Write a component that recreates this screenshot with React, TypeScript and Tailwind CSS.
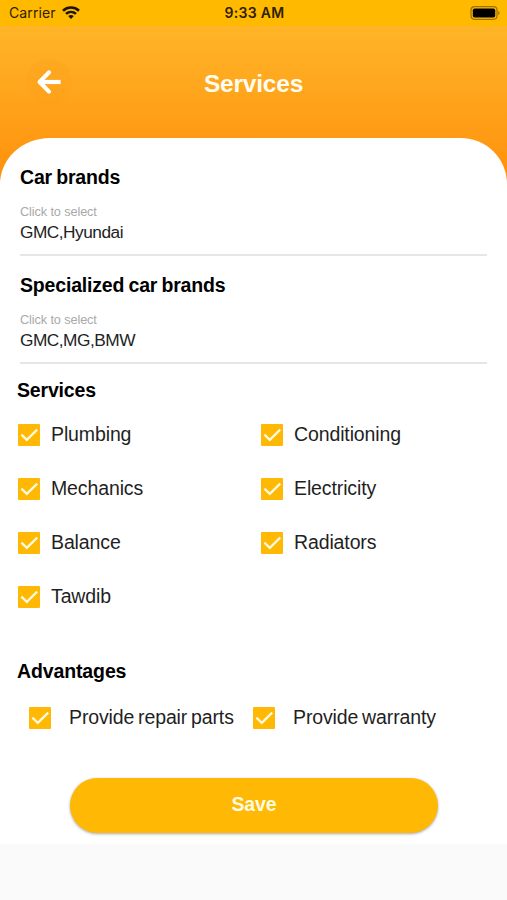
import React, { useState } from 'react';

const SERVICES = ['Plumbing', 'Conditioning', 'Mechanics', 'Electricity', 'Balance', 'Radiators', 'Tawdib'];
const ADVANTAGES = ['Provide repair parts', 'Provide warranty'];

interface CheckItemProps {
  label: string;
  checked: boolean;
  onToggle: () => void;
  className?: string;
}

function CheckItem({ label, checked, onToggle, className = '' }: CheckItemProps) {
  return (
    <button type="button" role="checkbox" aria-checked={checked} onClick={onToggle} className={`flex items-center text-left ${className}`}>
      <span className={`flex h-[22px] w-[22px] shrink-0 items-center justify-center rounded-[1px] ${checked ? 'bg-[#ffb803]' : 'border-2 border-gray-500'}`}>
        {checked && (
          <svg viewBox="0 0 22 22" className="h-[22px] w-[22px]" fill="none" stroke="#fffbe0" strokeWidth="2.2">
            <path d="M3.4 10.6 8.8 15.9 19.2 5.6" />
          </svg>
        )}
      </span>
      <span className="whitespace-nowrap pb-0.5 text-[19.5px] leading-6 tracking-[-0.12px] text-[#1f1f1f] [word-spacing:-1.5px]">{label}</span>
    </button>
  );
}

interface SelectFieldProps {
  title: string;
  value: string;
}

function SelectField({ title, value }: SelectFieldProps) {
  return (
    <section className="h-[108px]">
      <h2 className="text-[19.5px] font-bold leading-6 tracking-[-0.18px] text-black [word-spacing:-1px]">{title}</h2>
      <button type="button" className="mt-[15px] flex h-[52px] w-full flex-col items-start border-b-2 border-[#e6e6e6] text-left">
        <span className="text-[12.7px] leading-4 tracking-[-0.1px] text-[#a9a9a9]">Click to select</span>
        <span className="mt-0.5 text-[17.3px] leading-5 tracking-[-0.5px] text-[#222]">{value}</span>
      </button>
    </section>
  );
}

function StatusBar() {
  return (
    <div className="grid h-[26px] grid-cols-3 items-center bg-[#ffba00] pl-[9px] pr-[7px] font-['Inter',sans-serif] text-[14px] leading-[26px] text-[#2e2100]">
      <div className="flex items-center gap-[6px]">
        <span className="tracking-[0.1px]">Carrier</span>
        <svg viewBox="0 0 18 13" className="mb-0.5 h-[13px] w-[18px]" fill="none" stroke="#1c1400" strokeWidth="2.6">
          <path d="M1 4.7C5.5.5 12.5.5 17 4.7" />
          <path d="M4 7.9c2.9-2.6 7.1-2.6 10 0" />
          <path d="M6.2 10.1c1.7-1.5 3.9-1.5 5.6 0L9 13z" fill="#1c1400" stroke="none" />
        </svg>
      </div>
      <span className="text-center font-semibold tracking-[0.3px]">9:33 AM</span>
      <svg viewBox="0 0 30 14" className="h-[14px] w-[30px] justify-self-end">
        <rect x="1" y="0.7" width="26" height="12.6" rx="3.5" fill="none" stroke="#9b7100" strokeWidth="1.2" />
        <rect x="2.8" y="2.5" width="22.4" height="9" rx="1.8" fill="#000" />
        <path d="M28.2 4.8c1.8.8 1.8 3.6 0 4.4z" fill="#9b7100" />
      </svg>
    </div>
  );
}

export default function App() {
  const [selected, setSelected] = useState<string[]>([...SERVICES, ...ADVANTAGES]);

  const toggle = (name: string) => {
    setSelected((prev) => (prev.includes(name) ? prev.filter((item) => item !== name) : [...prev, name]));
  };

  return (
    <div className="flex h-[900px] w-[507px] flex-col overflow-hidden bg-[#fafafa] font-['Liberation_Sans',Arial,sans-serif]">
      <StatusBar />

      <div className="flex h-[818px] flex-col bg-linear-to-b from-[#ffb527] from-0% to-[#ff8f08] to-[158px]">
        <header className="grid h-28 grid-cols-[100px_1fr_100px] items-center">
          <button type="button" aria-label="Back" className="ml-[26px] flex h-[46px] w-[46px] items-center justify-center rounded-full bg-[#f89c17]/20">
            <svg viewBox="0 0 26 26" className="h-[26px] w-[26px]" fill="none" stroke="#fff" strokeWidth="4.2" strokeLinecap="round">
              <path d="M13 3.4 3.6 13l9.4 9.6" strokeLinejoin="round" />
              <path d="M4 13h20.6" strokeLinecap="butt" />
            </svg>
          </button>
          <h1 className="pt-1 text-center text-[24.5px] font-bold leading-8 tracking-[-0.2px] text-[#fffdf2]">Services</h1>
        </header>

        <main className="flex h-[706px] flex-col rounded-tl-[50px_46px] rounded-tr-[46px_46px] bg-white pt-[27px]">
          <div className="px-5">
            <SelectField title="Car brands" value="GMC,Hyundai" />
            <SelectField title="Specialized car brands" value="GMC,MG,BMW" />
          </div>

          <section className="px-[17px]">
            <h2 className="-mt-[3px] text-[19.5px] font-bold leading-6 tracking-[-0.18px] text-black">Services</h2>
            <div className="mt-[6px] grid grid-cols-[243px_1fr]">
              {SERVICES.map((name) => (
                <CheckItem key={name} label={name} checked={selected.includes(name)} onToggle={() => toggle(name)} className="h-[54px] gap-[11px] pl-px" />
              ))}
            </div>
          </section>

          <section className="mt-[35px] px-[17px]">
            <h2 className="text-[19.5px] font-bold leading-6 tracking-[-0.12px] text-black">Advantages</h2>
            <div className="mt-[11px] grid grid-cols-[224px_1fr] pl-3">
              {ADVANTAGES.map((name) => (
                <CheckItem key={name} label={name} checked={selected.includes(name)} onToggle={() => toggle(name)} className="h-12 gap-[18px]" />
              ))}
            </div>
          </section>

          <button type="button" className="ml-[70px] mt-9 h-[55px] w-[368px] rounded-full bg-[#ffb803] pb-0.5 text-[19.5px] font-bold tracking-[-0.15px] text-[#fffbe0] shadow-[0_1px_3px_rgba(0,0,0,0.35)]">
            Save
          </button>
        </main>
      </div>
    </div>
  );
}
